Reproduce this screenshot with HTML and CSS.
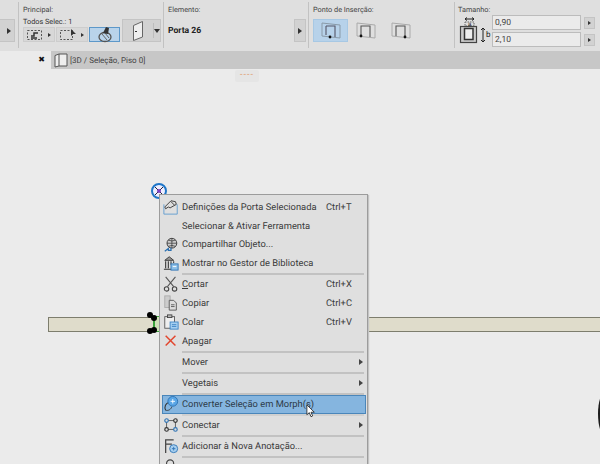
FILE: index.html
```html
<!DOCTYPE html>
<html lang="pt">
<head>
<meta charset="utf-8">
<title>Porta 26</title>
<link rel="stylesheet" href="styles.css">
</head>
<body>
<div class="app">
  <header class="toolbar">
    <section class="group g-stub">
      <div class="stub-btn"><span class="tri"></span></div>
    </section>
    <section class="group g-main">
      <div class="label">Principal:</div>
      <div class="sub">Todos Selec.: 1</div>
      <div class="main-row">
        <div class="tool t1">
          <svg width="16" height="12" viewBox="0 0 16 12"><rect x=".5" y="1.500" width="14" height="9" fill="none" stroke="#555" stroke-dasharray="2 1.500"/><path d="M4 7h3V4h4M4 9h6" stroke="#333" stroke-width="1.500" fill="none"/></svg>
          <span class="tri small"></span>
        </div>
        <div class="tool t2">
          <svg width="18" height="12" viewBox="0 0 18 12"><rect x=".5" y="1.500" width="12" height="9" fill="none" stroke="#555" stroke-dasharray="2 1.500"/><path d="M11 0v7l2-2 3 0z" fill="#333"/></svg>
          <span class="tri small"></span>
        </div>
        <div class="tool t3">
          <svg width="16" height="17" viewBox="0 0 16 17"><ellipse cx="8" cy="11" rx="6" ry="4.500" fill="none" stroke="#555" stroke-width="1.300"/><path d="M5 8l5 6M8 7l4 5" stroke="#666"/><path d="M6 7l3-6 3 1-1 6z" fill="#333"/></svg>
        </div>
        <div class="door-btn">
          <div class="door-face">
            <svg width="12" height="20" viewBox="0 0 12 20"><path d="M1.500 4.500 10.500 .5V16L1.500 19.500Z" fill="#eee" stroke="#666"/><rect x="3" y="10" width="2" height="1" fill="#333"/></svg>
          </div>
          <div class="door-arrow"><span class="tri down"></span></div>
        </div>
      </div>
    </section>
    <section class="group g-elem">
      <div class="label">Elemento:</div>
      <div class="elem-row">
        <span class="elem-name">Porta 26</span>
        <div class="stub-btn right"><span class="tri"></span></div>
      </div>
    </section>
    <section class="group g-ins">
      <div class="label">Ponto de Inserção:</div>
      <div class="ins-row">
        <div class="ins active"><svg width="20" height="18" viewBox="0 0 20 18"><path d="M1 1 19 3V16L1 14Z" fill="none" stroke="#8a9aa8"/><path d="M5 4h9v11M5 4v9" stroke="#556" stroke-width="1.100" fill="none"/><circle cx="9" cy="15" r="1.400" fill="#111"/></svg></div>
        <div class="ins"><svg width="20" height="18" viewBox="0 0 20 18"><path d="M1 1 19 3V16L1 14Z" fill="none" stroke="#aaa"/><path d="M5 14V4h9v11" stroke="#555" stroke-width="1.100" fill="none"/><circle cx="5" cy="14" r="1.400" fill="#111"/></svg></div>
        <div class="ins"><svg width="20" height="18" viewBox="0 0 20 18"><path d="M1 1 19 3V16L1 14Z" fill="none" stroke="#aaa"/><path d="M5 14V4h9v11" stroke="#555" stroke-width="1.100" fill="none"/><circle cx="14" cy="15" r="1.400" fill="#111"/></svg></div>
      </div>
    </section>
    <section class="group g-size">
      <div class="label">Tamanho:</div>
      <div class="size-row">
        <svg class="size-icon" width="34" height="31" viewBox="0 0 34 31"><path d="M7 5h9M7 5l2-1.500M7 5l2 1.500M16 5l-2-1.500M16 5l-2 1.500" stroke="#222" fill="none"/><rect x="7" y="8" width="9" height="4" fill="none" stroke="#666" stroke-dasharray="1.500 1"/><rect x="2.500" y="12.500" width="16" height="16" fill="#ccc" stroke="#444" stroke-width="1.200"/><rect x="6.500" y="14.500" width="8.500" height="11" fill="#eee" stroke="#333" stroke-width="1.500"/><path d="M25 14v14M25 14l-2 2M25 14l2 2M25 28l-2-2M25 28l2-2" stroke="#222" fill="none"/><text x="28" y="23" class="size-b">b</text><text x="10" y="11.500" class="size-a">a</text></svg>
        <div class="size-fields">
          <div class="size-line"><div class="field">0,90</div><div class="mini"><span class="tri small"></span></div></div>
          <div class="size-line"><div class="field">2,10</div><div class="mini"><span class="tri small"></span></div></div>
        </div>
      </div>
    </section>
  </header>

  <nav class="tabs">
    <div class="tab-close">✖</div>
    <div class="tab-strip">
      <svg width="14" height="15" viewBox="0 0 14 15"><path d="M1 2.500 5 1H13V13H5L1 14Z" fill="#eee" stroke="#555"/><path d="M5 1V13" stroke="#555"/></svg>
      <span>[3D / Seleção, Piso 0]</span>
    </div>
  </nav>

  <main class="canvas">
    <div class="grip"><span>----</span></div>
    <div class="wall"></div>
    <div class="door-sel">
      <i class="dot d1"></i><i class="dot d2"></i><i class="dot d3"></i><i class="dot d4"></i>
    </div>
    <div class="target"><svg width="20" height="20" viewBox="0 0 20 20"><circle cx="9" cy="9" r="7" fill="#eef" stroke="#1f76c8" stroke-width="2"/><path d="M5 5l8 8M13 5l-8 8" stroke="#223" stroke-width="1"/><circle cx="9" cy="9" r="2" fill="#7a3fc0"/></svg></div>
    <div class="blob"></div>

    <div class="menu">
      <div class="item r19"><span class="ic"><svg viewBox="0 0 18 18"><path d="M1 6v11h15V6" fill="none" stroke="#5d9bd0"/><path d="M2 9 9 2l5 1 1 3-7 4-2-1-3 2z" fill="#ddd" stroke="#333"/><path d="M9 3l4 4" stroke="#333"/></svg></span><span class="tx">Definições da Porta Selecionada</span><span class="sc">Ctrl+T</span></div>
      <div class="item r19"><span class="ic"></span><span class="tx">Selecionar &amp; Ativar Ferramenta</span></div>
      <div class="item r19"><span class="ic"><svg viewBox="0 0 18 18"><circle cx="10" cy="7" r="5.500" fill="#ccc" stroke="#333"/><path d="M4.500 7h11M10 1.500v11M6 3.500q4 2 8 0M6 10.500q4-2 8 0" stroke="#333" fill="none" stroke-width=".8"/><path d="M2 16l4-3v2h3v-3" fill="none" stroke="#2a6fb0" stroke-width="1.400"/></svg></span><span class="tx">Compartilhar Objeto...</span></div>
      <div class="item r19"><span class="ic"><svg viewBox="0 0 18 18"><path d="M2 6 7 2l5 4z" fill="#999" stroke="#333"/><path d="M3 7v8M6 7v8M9 7v4M12 7v2M1 16h8" stroke="#333" stroke-width="1.200"/><rect x="9" y="10" width="8" height="7" fill="#8ec0e8" stroke="#2f74b5"/><path d="M11 13h4" stroke="#fff"/></svg></span><span class="tx">Mostrar no Gestor de Biblioteca</span></div>
      <div class="sep"></div>
      <div class="item"><span class="ic"><svg viewBox="0 0 18 18"><path d="M3 1l9 11M14 1L5 12" stroke="#555" stroke-width="1.200"/><circle cx="4" cy="14.500" r="2.500" fill="none" stroke="#444" stroke-width="1.200"/><circle cx="13" cy="14.500" r="2.500" fill="none" stroke="#444" stroke-width="1.200"/></svg></span><span class="tx"><u>C</u>ortar</span><span class="sc">Ctrl+X</span></div>
      <div class="item"><span class="ic"><svg viewBox="0 0 18 18"><rect x="2" y="1" width="6" height="13" fill="#ccc" stroke="#aaa"/><path d="M7 6h5l3 3v8H7z" fill="#ddd" stroke="#555"/><path d="M9 11h4M9 13h4" stroke="#555"/></svg></span><span class="tx">Copiar</span><span class="sc">Ctrl+C</span></div>
      <div class="item"><span class="ic"><svg viewBox="0 0 18 18"><rect x="2" y="3" width="11" height="13" fill="#eee" stroke="#555"/><rect x="5" y="1" width="5" height="3" fill="#bbb" stroke="#444"/><rect x="8" y="9" width="9" height="8" fill="#a8d0f0" stroke="#3a83c5"/><path d="M10 12h5M10 14h5" stroke="#3a83c5"/></svg></span><span class="tx">Colar</span><span class="sc">Ctrl+V</span></div>
      <div class="item"><span class="ic"><svg viewBox="0 0 18 18"><path d="M3 3l11 11M14 3L3 14" stroke="#e2472f" stroke-width="1.700"/></svg></span><span class="tx">Apagar</span></div>
      <div class="sep"></div>
      <div class="item"><span class="ic"></span><span class="tx">Mover</span><span class="tri sub-tri"></span></div>
      <div class="sep"></div>
      <div class="item"><span class="ic"></span><span class="tx">Vegetais</span><span class="tri sub-tri"></span></div>
      <div class="sep"></div>
      <div class="item selected"><span class="ic"><svg viewBox="0 0 18 18"><path d="M3 16C1 12 3 8 7 7" fill="none" stroke="#333" stroke-width="1.200"/><path d="M3 16c3 1 6-1 7-4" fill="none" stroke="#333"/><circle cx="11" cy="6" r="5.500" fill="#5aa6e6" stroke="#2a6fb0"/><path d="M8.500 6h5M11 3.500v5" stroke="#fff"/></svg></span><span class="tx">Converter Seleção em Morph(s)</span></div>
      <div class="sep sep-blank"></div>
      <div class="item"><span class="ic"><svg viewBox="0 0 18 18"><path d="M4 4h10v10H4z" fill="none" stroke="#555"/><circle cx="4" cy="4" r="2" fill="#ddd" stroke="#2f74b5" stroke-width="1.300"/><circle cx="14" cy="4" r="2" fill="#ddd" stroke="#333" stroke-width="1.300"/><circle cx="4" cy="14" r="2" fill="#ddd" stroke="#333" stroke-width="1.300"/><circle cx="14" cy="14" r="2" fill="#ddd" stroke="#2f74b5" stroke-width="1.300"/></svg></span><span class="tx">Conectar</span><span class="tri sub-tri"></span></div>
      <div class="sep"></div>
      <div class="item"><span class="ic"><svg viewBox="0 0 18 18"><path d="M3 17V2h9M3 7h7" fill="none" stroke="#444" stroke-width="1.400"/><circle cx="12" cy="12" r="4.500" fill="#a8d0f0" stroke="#2f74b5"/><path d="M10 12h4M12 10v4" stroke="#2f74b5"/></svg></span><span class="tx">Adicionar à Nova Anotação...</span></div>
      <div class="sep"></div>
      <div class="item"><span class="ic"><svg viewBox="0 0 18 18"><circle cx="8" cy="5" r="4" fill="none" stroke="#444" stroke-width="1.300"/></svg></span></div>
    </div>

    <svg class="cursor" width="10" height="14" viewBox="0 0 12 17"><path d="M1 1v12l3-2.500 2 5 2-1-2-4.500h4z" fill="#fff" stroke="#222"/></svg>
  </main>
</div>
</body>
</html>
```
FILE: styles.css
```css
* { box-sizing: border-box; }
html, body { margin: 0; height: 100%; overflow: hidden; }
body { font-family: Roboto, "Open Sans", "Liberation Sans", sans-serif; color: #333; background: #ebebeb; text-rendering: geometricPrecision; }
.app { width: 600px; height: 464px; display: flex; flex-direction: column; overflow: hidden; }

.toolbar { height: 51px; flex: none; display: flex; background: #dfdfdf; padding-top: 2px; }
.group { position: relative; height: 46px; border-right: 1px solid #c2c2c2; flex: none; }
.label { font-size: 7.300px; line-height: 11px; padding-top: 2px; color: #444; height: 13px; }
.tri { display: inline-block; width: 0; height: 0; border-left: 4px solid #333; border-top: 3px solid transparent; border-bottom: 3px solid transparent; }
.tri.small { border-left-width: 3px; border-top-width: 2.500px; border-bottom-width: 2.500px; }
.tri.down { border-left: 3px solid transparent; border-right: 3px solid transparent; border-top: 4px solid #333; border-bottom: 0; }

.g-stub { width: 19px; padding-top: 17px; }
.stub-btn { width: 14px; height: 23px; background: #d2d2d2; border: 1px solid #c4c4c4; display: flex; align-items: center; justify-content: center; }
.g-stub .stub-btn { border-left: 0; width: 15px; justify-content: flex-end; padding-right: 3px; }

.g-main { width: 145px; padding-left: 4px; }
.sub { font-size: 7.300px; line-height: 11px; margin-top: 1px; }
.main-row { display: flex; align-items: flex-end; height: 15px; position: relative; }
.tool { width: 32px; height: 15px; background: #d8d8d8; border: 1px solid #cdcdcd; display: flex; align-items: center; justify-content: space-between; padding: 0 3px 0 3px; margin-right: 1px; }
.t3 { width: 31px; background: #b9d3ea; border-color: #5d98c9; justify-content: center; padding: 0; }
.door-btn { position: absolute; left: 99px; bottom: 0; width: 39px; height: 23px; background: #d2d2d2; border: 1px solid #c4c4c4; display: flex; }
.door-face { width: 30px; display: flex; align-items: center; justify-content: center; }
.door-arrow { flex: 1; display: flex; align-items: center; justify-content: center; margin: 3px 0; border-left: 1px solid #bdbdbd; }

.g-elem { width: 145px; padding-left: 4px; }
.elem-row { display: flex; align-items: center; justify-content: space-between; margin-top: 4px; height: 23px; }
.elem-name { font-size: 8.600px; font-weight: 700; color: #222; }
.stub-btn.right { width: 12px; margin-right: 2px; }

.g-ins { width: 146px; padding-left: 4px; }
.ins-row { display: flex; margin-top: 4px; }
.ins { width: 35px; height: 23px; display: flex; align-items: center; justify-content: center; }
.ins.active { background: #b7d2ea; border: 1px solid #a7c8e4; }

.g-size { flex: 1; border-right: 0; padding-left: 3px; }
.size-row { display: flex; height: 33px; align-items: flex-start; }
.size-icon { margin-top: -1px; flex: none; }
.size-b { font: 8px Roboto, sans-serif; fill: #222; }
.size-a { font: 6px Roboto, sans-serif; fill: #222; }
.size-fields { display: flex; flex-direction: column; gap: 2px; }
.size-line { display: flex; align-items: center; gap: 3px; }
.field { width: 89px; height: 15px; background: #ebebeb; border: 1px solid #bcbcbc; font-size: 8.500px; line-height: 14px; padding-left: 2px; color: #444; }
.mini { width: 11px; height: 12px; background: #d2d2d2; border: 1px solid #c4c4c4; display: flex; align-items: center; justify-content: center; }

.tabs { height: 18px; flex: none; display: flex; }
.tab-close { width: 51px; background: #ebebeb; font-size: 8px; line-height: 18px; text-align: right; padding-right: 6px; color: #111; }
.tab-strip { flex: 1; background: #c7c7c7; display: flex; align-items: center; gap: 2px; padding-left: 3px; font-size: 8px; color: #444; }

.canvas { position: relative; flex: 1; background: #ebebeb; }
.grip { position: absolute; left: 235px; top: 1px; width: 24px; height: 12px; background: #e5e5e5; border-radius: 2px; color: #e09a66; font-size: 9px; line-height: 11px; text-align: center; letter-spacing: 1px; }
.wall { position: absolute; left: 48px; right: 0; top: 248px; height: 15px; background: #dfdccb; border: 1px solid #7d7d6d; border-right: 0; }
.door-sel { position: absolute; left: 153px; top: 247px; width: 7px; height: 16px; background: #cfe0b8; border: 1px solid #3aa13a; border-left-width: 2px; border-right: 0; }
.dot { position: absolute; width: 6px; height: 6px; background: #000; border-radius: 50%; }
.d1 { left: -8px; top: -5px; }
.d2 { left: -8px; top: 11px; }
.d3 { left: -4px; top: -2px; }
.d4 { left: -4px; top: 10px; }
.target { position: absolute; left: 150px; top: 113px; }
.blob { position: absolute; right: -14px; top: 322px; width: 16px; height: 46px; border-radius: 50%; background: #1c1c1c; }

.menu { position: absolute; left: 159px; top: 125px; width: 209px; height: 290px; background: #dfdfdf; border: 1px solid #9c9c9c; border-bottom: 0; box-shadow: 1px 1px 1px #c4c4c4; padding-top: 3px; display: flex; flex-direction: column; font-size: 9.350px; color: #3a3a3a; }
.item { display: flex; align-items: center; height: 19px; flex: none; padding: 0 6px 0 3px; position: relative; }
.r19 { height: 18.700px; }
.ic { width: 19px; height: 16px; flex: none; display: flex; align-items: center; }
.ic svg { width: 16px; height: 16px; }
.tx { flex: 1; white-space: nowrap; }
.sc { width: 35px; flex: none; white-space: nowrap; }
.sep { height: 2px; flex: none; margin: 0 3px 0 22px; background: #c2c2c2; }
.sep-blank { background: #d0d0d0; }
.sub-tri { border-left-color: #444; margin-right: -2px; }
.item.selected { background: #85b5df; border: 1px solid #4a86ba; margin: 0 1px 0 2px; padding: 0 3px 0 0; color: #2d3a47; }
.cursor { position: absolute; left: 306px; top: 335px; }
```
